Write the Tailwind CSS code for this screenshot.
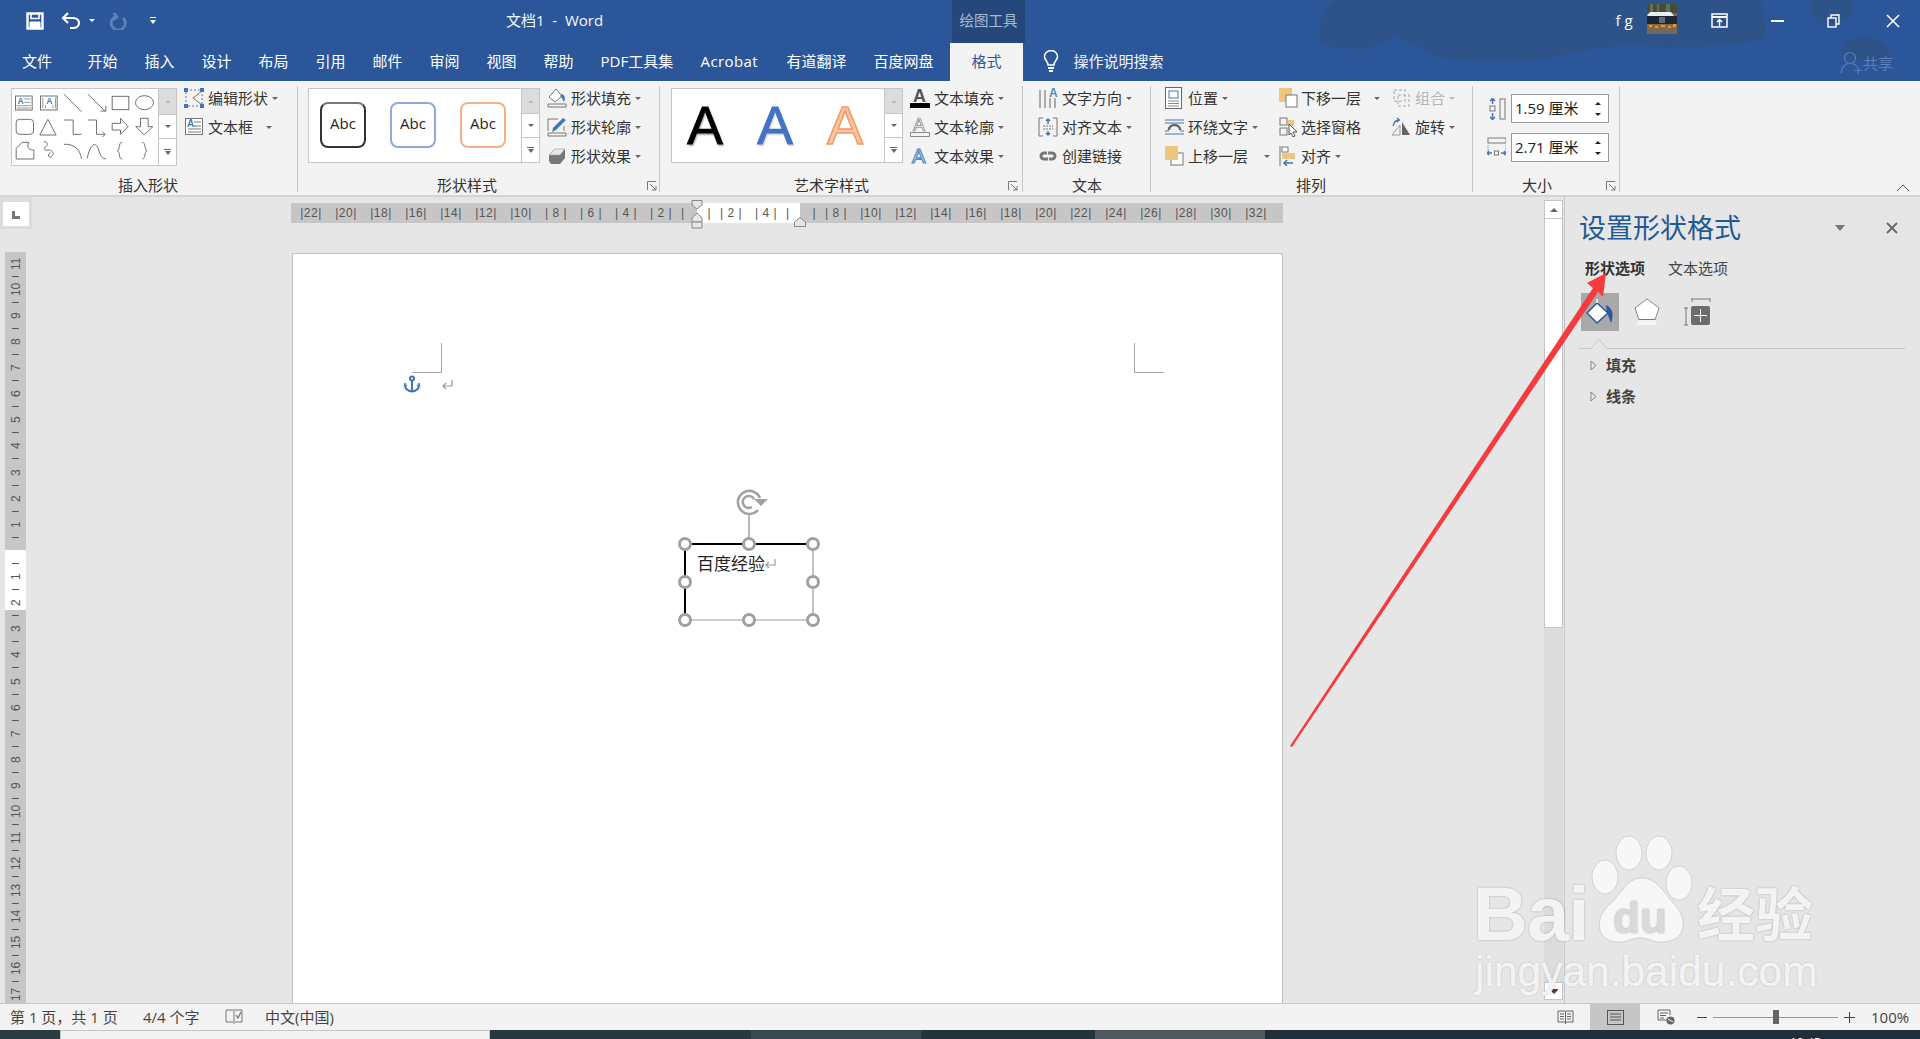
<!DOCTYPE html>
<html lang="zh-CN">
<head>
  <meta charset="UTF-8" />
  <title>文档1 - Word</title>
  <script src="https://cdn.jsdelivr.net/npm/@tailwindcss/browser@4"></script>
</head>
<body class="relative w-[1920px] h-[1039px] overflow-hidden flex flex-col bg-[#e6e6e6] text-[#333] [font-family:'Open_Sans','Noto_Sans_CJK_SC',sans-serif]">

  <!-- title + tabs -->
  <div class="relative bg-[#2b579a] text-white h-[81px] shrink-0">
    <svg class="absolute left-0 top-0" width="1920" height="81" viewBox="0 0 1920 81" fill="#2d5388">
      <path d="M1335 0C1318 14 1318 30 1322 44C1350 52 1385 50 1396 34C1405 46 1418 44 1428 50C1432 60 1480 64 1538 60C1560 58 1590 44 1640 46C1680 48 1735 48 1762 38C1772 34 1760 0 1760 0Z"/>
      <path d="M1812 0C1806 12 1812 24 1830 24C1850 24 1856 12 1852 0Z"/>
      <path d="M1842 50C1846 36 1866 32 1880 42C1892 50 1892 60 1886 66C1870 60 1852 62 1842 50Z"/>
    </svg>

    <div class="relative flex items-center h-[43px] pb-[2px]">
      <svg class="ml-[26px]" width="18" height="18" viewBox="0 0 18 18" fill="none" stroke="#fff" stroke-width="2.400"><path d="M1.500 1.500H16.500V16.500H1.500Z"/><path d="M5 1.500V6.500H13V1.500" stroke-width="1.600"/><path d="M4 10H14V16H4Z" fill="#fff" stroke-width="1"/></svg>
      <svg class="ml-[17px]" width="20" height="18" viewBox="0 0 20 18" fill="none" stroke="#fff" stroke-width="2.200"><path d="M7 1L2 6L7 11"/><path d="M2.500 6H12C20 6 20 16 12 16H9"/></svg>
      <i class="ml-[8px] border-x-[3px] border-t-[3.500px] border-x-transparent border-t-white"></i>
      <svg class="ml-[14px]" width="18" height="18" viewBox="0 0 18 18" fill="none" stroke="#5f82b5" stroke-width="2.800"><path d="M5 1L8 5L4 8"/><path d="M7 4.500A7 7 0 1 0 14 6"/></svg>
      <svg class="ml-[22px]" width="8" height="9" viewBox="0 0 8 9" fill="#fff"><rect x="1" y="1" width="6" height="1"/><path d="M1 4H7L4 8Z"/></svg>

      <span class="ml-[349px] w-[108px] text-[15px] whitespace-pre text-[#f3f6fb]">文档1  -  Word</span>
      <div class="ml-[338px] w-[73px] h-[43px] -mb-[2px] pb-[2px] bg-[#24487c] flex items-center justify-center text-[14.500px] text-[#a8b9d4] whitespace-nowrap">绘图工具</div>

      <span class="ml-[590.500px] text-[15px] whitespace-pre">f g</span>
      <svg class="ml-[14px] self-start mt-[4px]" width="30" height="30" viewBox="0 0 30 30">
        <rect width="30" height="30" fill="#6c6a66"/>
        <path d="M0 0H30V9H0Z" fill="#4a4a3c"/><path d="M3 0H6V8H3ZM10 0H12V8H10ZM19 0H23V8H19Z" fill="#5d7550"/>
        <path d="M3 8H24L27 12H0Z" fill="#e9eef2"/>
        <path d="M0 12H30V20H0Z" fill="#1d2635"/><path d="M12 13H18V19H12Z" fill="#5d6a80"/>
        <path d="M0 20H30V25H0Z" fill="#8a6a3a"/><path d="M2 21H5V23H2ZM8 22H11V24H8ZM14 21H18V23H14ZM21 22H24V24H21ZM26 20H29V23H26Z" fill="#e79a2e"/>
      </svg>
      <svg class="ml-[34px]" width="17" height="15" viewBox="0 0 17 15" fill="none" stroke="#fff" stroke-width="1.500"><rect x="1" y="1" width="15" height="13"/><path d="M1 4H16" stroke-width="2"/><path d="M8.500 13V7M6 9L8.500 6.500L11 9"/></svg>
      <div class="ml-[43px] w-[13px] h-[2px] bg-white"></div>
      <svg class="ml-[43.500px]" width="13" height="14" viewBox="0 0 13 14" fill="none" stroke="#fff" stroke-width="1.400"><rect x="1" y="4" width="8" height="9"/><path d="M4 4V1H12V10H9"/></svg>
      <svg class="ml-[46px]" width="14" height="14" viewBox="0 0 14 14" stroke="#fff" stroke-width="1.500"><path d="M1 1L13 13M13 1L1 13"/></svg>
    </div>

    <div class="relative flex items-center h-[38px] pb-[2px] pl-[22px] gap-[27px] text-[15px] whitespace-nowrap">
      <span class="w-[30px] mr-[8.500px]">文件</span>
      <span class="w-[30px]">开始</span><span class="w-[30px]">插入</span><span class="w-[30px]">设计</span><span class="w-[30px]">布局</span><span class="w-[30px]">引用</span><span class="w-[30px]">邮件</span><span class="w-[30px]">审阅</span><span class="w-[30px]">视图</span><span class="w-[30px]">帮助</span>
      <span class="w-[73px]">PDF工具集</span>
      <span class="w-[59px] tracking-[.4px]">Acrobat</span>
      <span class="w-[60px]">有道翻译</span>
      <span class="w-[60px]">百度网盘</span>
      <div class="-ml-[10.500px] w-[73px] h-[38px] -mb-[2px] pb-[2px] bg-[#f3f3f3] text-[#2b579a] flex items-center justify-center">格式</div>
      <svg class="-ml-[7.500px]" width="16" height="22" viewBox="0 0 16 22" fill="none" stroke="#fff" stroke-width="1.500"><path d="M5 15C5 11 1.500 10 1.500 6.500A6.500 6 0 0 1 14.500 6.500C14.500 10 11 11 11 15Z"/><path d="M5 18H11M6 21H10" stroke-width="2"/></svg>
      <span class="-ml-[12px] text-[#f1f4f9]">操作说明搜索</span>
      <div class="absolute left-[1840px] top-[8px] flex items-center text-[#5d7eb2] text-[15px]">
        <svg width="23" height="24" viewBox="0 0 23 24" fill="none" stroke="#5d7eb2" stroke-width="1.200"><circle cx="10" cy="7" r="5.500"/><path d="M1 22C2 15 6 13 8 12.500M12 12.500C14 13 16 14 17 16"/><path d="M18 16V23M14.500 19.500H22"/></svg>
        <span>共享</span>
      </div>
    </div>
  </div>

  <!-- ribbon -->
  <div class="relative flex h-[116px] shrink-0 bg-[#f3f3f3] border-b-[2px] border-[#d4d4d4] text-[15px] whitespace-nowrap">

    <!-- 插入形状 -->
    <div class="mt-[5px] w-[298px] h-[106px] border-r border-[#c6c6c6] flex flex-col">
      <div class="h-[88px] pt-[2px] pl-[11px] flex">
        <div class="flex h-[78px] border border-[#c6c6c6] bg-white">
          <svg width="146" height="76" viewBox="20 12 437 228" fill="none" stroke="#666" stroke-width="2.800">
            <rect x="30" y="33" width="50" height="42"/><text x="36" y="56" font-size="26" font-family="Liberation Sans" font-weight="bold" fill="#4a7ebb" stroke="none">A</text><path d="M56 42H76M56 52H76M34 62H76M34 69H76" stroke-width="2"/>
            <rect x="105" y="33" width="50" height="42"/><text x="122" y="56" font-size="26" font-family="Liberation Sans" font-weight="bold" fill="#4a7ebb" stroke="none">A</text><path d="M112 38V70M120 60V70M142 60V70M150 38V70" stroke-width="2"/>
            <path d="M175 27L228 80M247 27L300 80M285 78H301V62"/>
            <rect x="320" y="34" width="50" height="40"/><ellipse cx="417" cy="53" rx="27" ry="21"/>
            <rect x="32" y="103" width="52" height="45" rx="10"/><path d="M127 103L103 150H152Z"/>
            <path d="M175 105H203V148H228M247 105H273V148H298M291 140L299 148L291 156"/>
            <path d="M320 115H345V100L368 125L345 148V135H320Z"/><path d="M405 100H428V125H442L416 150L391 125H405Z"/>
            <path d="M32 190L50 172H70C60 190 75 195 85 195V222H32Z"/>
            <path d="M115 170C125 170 130 178 122 184C112 190 115 198 130 195C142 195 148 208 138 215C128 222 125 205 135 203"/>
            <path d="M175 178C205 175 225 195 228 222M245 220C255 175 270 170 278 190C285 215 290 220 302 222"/>
            <path d="M350 172C338 172 345 195 335 197C345 199 338 222 350 222M410 172C422 172 415 195 425 197C415 199 422 222 410 222"/>
          </svg>
          <div class="w-[18px] border-l border-[#c6c6c6] flex flex-col">
            <div class="h-[26px] bg-[#dcdcdc] flex items-center justify-center border-b border-[#c6c6c6]"><i class="border-x-[3px] border-b-[3.500px] border-x-transparent border-b-[#bbb]"></i></div>
            <div class="h-[24px] flex items-center justify-center border-b border-[#c6c6c6]"><i class="border-x-[3px] border-t-[3.500px] border-x-transparent border-t-[#666]"></i></div>
            <div class="flex-1 flex flex-col items-center justify-center gap-px"><b class="w-[7px] h-px bg-[#666]"></b><i class="border-x-[3.500px] border-t-[4px] border-x-transparent border-t-[#666]"></i></div>
          </div>
        </div>
        <div class="ml-[7px] -mt-px flex flex-col gap-[7px]">
          <div class="flex items-center h-[22px]">
            <svg class="mr-[3px]" width="21" height="20" viewBox="0 0 21 20" fill="none"><rect x="2" y="2" width="16" height="16" stroke="#777" stroke-dasharray="2 2"/><path d="M18 3L9 10L18 17" stroke="#777"/><path d="M0 0H4V4H0ZM16 0H20V4H16ZM0 16H4V20H0ZM16 16H20V20H16Z" fill="#3f78b8"/></svg>
            <span>编辑形状</span><i class="ml-[4px] border-x-[3px] border-t-[3.500px] border-x-transparent border-t-[#666]"></i>
          </div>
          <div class="flex items-center h-[22px]">
            <svg class="mr-[3px]" width="21" height="20" viewBox="0 0 21 20" fill="none" stroke="#777"><rect x="1.500" y="1.500" width="17" height="16" fill="#fff"/><path d="M10 5H17M10 9H17M4 12H17M4 15H17"/><text x="3" y="10" font-size="10" font-family="Liberation Sans" font-weight="bold" fill="#3f78b8" stroke="none">A</text></svg>
            <span>文本框</span><i class="ml-[13px] border-x-[3px] border-t-[3.500px] border-x-transparent border-t-[#666]"></i>
          </div>
        </div>
      </div>
      <div class="h-[18px] leading-[22px] pl-[118px]">插入形状</div>
    </div>

    <!-- 形状样式 -->
    <div class="relative mt-[5px] w-[362px] h-[106px] border-r border-[#c6c6c6] flex flex-col">
      <div class="h-[88px] pt-[2px] pl-[10px] flex">
        <div class="flex h-[75px] border border-[#c6c6c6] bg-white">
          <div class="w-[212px] pl-[11px] pt-[13px] flex gap-[24px] [font-family:'Open_Sans',sans-serif] text-[15px] text-[#222]">
            <div class="w-[46px] h-[46px] rounded-[8px] border-2 border-[#333] border-t-[#777] flex items-center justify-center pb-[4px]">Abc</div>
            <div class="w-[46px] h-[46px] rounded-[8px] border-2 border-[#8eaadb] flex items-center justify-center pb-[4px]">Abc</div>
            <div class="w-[46px] h-[46px] rounded-[8px] border-2 border-[#f4b183] flex items-center justify-center pb-[4px]">Abc</div>
          </div>
          <div class="w-[18px] border-l border-[#c6c6c6] flex flex-col">
            <div class="h-[25px] bg-[#dcdcdc] flex items-center justify-center border-b border-[#c6c6c6]"><i class="border-x-[3px] border-b-[3.500px] border-x-transparent border-b-[#bbb]"></i></div>
            <div class="h-[24px] flex items-center justify-center border-b border-[#c6c6c6]"><i class="border-x-[3px] border-t-[3.500px] border-x-transparent border-t-[#666]"></i></div>
            <div class="flex-1 flex flex-col items-center justify-center gap-px"><b class="w-[7px] h-px bg-[#666]"></b><i class="border-x-[3.500px] border-t-[4px] border-x-transparent border-t-[#666]"></i></div>
          </div>
        </div>
        <div class="ml-[7px] -mt-px flex flex-col gap-[7px]">
          <div class="flex items-center h-[22px]">
            <svg class="mr-[4px]" width="20" height="20" viewBox="0 0 20 20" fill="none" stroke="#777"><path d="M9 1L2 9L8 14L15 8Z" fill="#fff"/><path d="M15 6C19 8 18 12 17 14C15 11 15 9 13 8Z" fill="#3f78b8" stroke="none"/><path d="M1 16H19V19H1Z" fill="#f3f3f3"/></svg>
            <span>形状填充</span><i class="ml-[4px] border-x-[3px] border-t-[3.500px] border-x-transparent border-t-[#666]"></i>
          </div>
          <div class="flex items-center h-[22px]">
            <svg class="mr-[4px]" width="20" height="20" viewBox="0 0 20 20" fill="none" stroke="#777"><path d="M1 14V2H11M17 9V14"/><path d="M16 1L19 3L9 13L5 15L6 11Z" fill="#3f78b8" stroke="none"/><path d="M1 16H19V19H1Z" fill="#f3f3f3"/></svg>
            <span>形状轮廓</span><i class="ml-[4px] border-x-[3px] border-t-[3.500px] border-x-transparent border-t-[#666]"></i>
          </div>
          <div class="flex items-center h-[22px]">
            <svg class="mr-[4px]" width="20" height="20" viewBox="0 0 20 20"><path d="M2 9L8 3H18V12L13 18H4L2 15Z" fill="#777"/><path d="M2 9L8 3H18L13 9Z" fill="#e8e8e8" stroke="#999" stroke-width=".6"/></svg>
            <span>形状效果</span><i class="ml-[4px] border-x-[3px] border-t-[3.500px] border-x-transparent border-t-[#666]"></i>
          </div>
        </div>
      </div>
      <div class="h-[18px] leading-[22px] pl-[139px]">形状样式</div>
      <svg class="absolute right-[2px] bottom-[1px]" width="10" height="10" viewBox="0 0 10 10" fill="none" stroke="#777"><path d="M.5 9V.5H9M3 3L9 9M9 5V9H5"/></svg>
    </div>

    <!-- 艺术字样式 -->
    <div class="relative mt-[5px] w-[363px] h-[106px] border-r border-[#c6c6c6] flex flex-col">
      <div class="h-[88px] pt-[2px] pl-[11px] flex">
        <div class="flex h-[75px] border border-[#c6c6c6] bg-white">
          <div class="w-[212px] flex items-center pl-[15px] gap-[34px] text-[54px] leading-none [font-family:'Liberation_Sans',sans-serif] pb-[2px]">
            <span class="w-[36px] text-center text-black [-webkit-text-stroke:.8px_#000] [text-shadow:1px_2px_2px_rgba(0,0,0,.35)]">A</span>
            <span class="w-[36px] text-center text-[#4472c4] [-webkit-text-stroke:.8px_#4472c4] [text-shadow:1px_2px_2px_rgba(0,0,0,.2)]">A</span>
            <span class="w-[36px] text-center text-[#fbc5a4] [-webkit-text-stroke:1.500px_#ed9a63]">A</span>
          </div>
          <div class="w-[18px] border-l border-[#c6c6c6] flex flex-col">
            <div class="h-[25px] bg-[#dcdcdc] flex items-center justify-center border-b border-[#c6c6c6]"><i class="border-x-[3px] border-b-[3.500px] border-x-transparent border-b-[#bbb]"></i></div>
            <div class="h-[24px] flex items-center justify-center border-b border-[#c6c6c6]"><i class="border-x-[3px] border-t-[3.500px] border-x-transparent border-t-[#666]"></i></div>
            <div class="flex-1 flex flex-col items-center justify-center gap-px"><b class="w-[7px] h-px bg-[#666]"></b><i class="border-x-[3.500px] border-t-[4px] border-x-transparent border-t-[#666]"></i></div>
          </div>
        </div>
        <div class="ml-[7px] -mt-px flex flex-col gap-[7px]">
          <div class="flex items-center h-[22px]">
            <svg class="mr-[4px]" width="20" height="20" viewBox="0 0 20 20"><text x="3" y="14" font-size="18" font-family="Liberation Sans" font-weight="bold" fill="#555">A</text><rect x="0" y="15" width="20" height="5" fill="#000"/></svg>
            <span>文本填充</span><i class="ml-[4px] border-x-[3px] border-t-[3.500px] border-x-transparent border-t-[#666]"></i>
          </div>
          <div class="flex items-center h-[22px]">
            <svg class="mr-[4px]" width="20" height="20" viewBox="0 0 20 20"><text x="3" y="14" font-size="18" font-family="Liberation Sans" fill="#fff" stroke="#777" stroke-width=".7">A</text><path d="M.5 15.500H19.500V19.500H.5Z" fill="#f3f3f3" stroke="#888"/></svg>
            <span>文本轮廓</span><i class="ml-[4px] border-x-[3px] border-t-[3.500px] border-x-transparent border-t-[#666]"></i>
          </div>
          <div class="flex items-center h-[22px]">
            <svg class="mr-[4px]" width="20" height="20" viewBox="0 0 20 20"><text x="2" y="17" font-size="20" font-family="Liberation Sans" fill="#fff" stroke="#4a8ac7" stroke-width="1.200">A</text></svg>
            <span>文本效果</span><i class="ml-[4px] border-x-[3px] border-t-[3.500px] border-x-transparent border-t-[#666]"></i>
          </div>
        </div>
      </div>
      <div class="h-[18px] leading-[22px] pl-[134px]">艺术字样式</div>
      <svg class="absolute right-[4px] bottom-[1px]" width="10" height="10" viewBox="0 0 10 10" fill="none" stroke="#777"><path d="M.5 9V.5H9M3 3L9 9M9 5V9H5"/></svg>
    </div>

    <!-- 文本 -->
    <div class="mt-[5px] w-[128px] h-[106px] border-r border-[#c6c6c6] flex flex-col">
      <div class="h-[88px] pt-[1px] pl-[15px] flex flex-col gap-[7px]">
        <div class="flex items-center h-[22px]">
          <svg class="mr-[4px]" width="20" height="24" viewBox="0 0 20 24" fill="none" stroke="#666"><path d="M2 4V22M7 4V22M12 12V22M17 12V22"/><text x="11" y="11" font-size="12" font-family="Liberation Sans" font-weight="bold" fill="#4a8ac7" stroke="none">A</text></svg>
          <span>文字方向</span><i class="ml-[4px] border-x-[3px] border-t-[3.500px] border-x-transparent border-t-[#666]"></i>
        </div>
        <div class="flex items-center h-[22px]">
          <svg class="mr-[4px]" width="20" height="20" viewBox="0 0 20 20" fill="none" stroke="#777"><path d="M5 1H1V19H5M15 1H19V19H15"/><path d="M5 9H15M5 12H15" stroke-dasharray="2 1"/><path d="M10 2V7M8 4L10 2L12 4M10 18V14M8 16L10 18L12 16" stroke="#3f78b8" stroke-width="1.500"/></svg>
          <span>对齐文本</span><i class="ml-[4px] border-x-[3px] border-t-[3.500px] border-x-transparent border-t-[#666]"></i>
        </div>
        <div class="flex items-center h-[22px]">
          <svg class="mr-[4px]" width="20" height="20" viewBox="0 0 20 20" fill="none" stroke="#777" stroke-width="3"><path d="M9 7H6A3 3 0 0 0 6 13H10"/><path d="M11 13H14A3 3 0 0 0 14 7H10"/></svg>
          <span>创建链接</span>
        </div>
      </div>
      <div class="h-[18px] leading-[22px] pl-[49px]">文本</div>
    </div>

    <!-- 排列 -->
    <div class="mt-[5px] w-[322px] h-[106px] border-r border-[#c6c6c6] flex flex-col">
      <div class="h-[88px] pt-[1px] pl-[14px] flex">
        <div class="w-[114px] flex flex-col gap-[7px]">
          <div class="flex items-center h-[22px]">
            <svg class="mr-[4px]" width="19" height="22" viewBox="0 0 19 22" fill="none" stroke="#666"><rect x=".5" y=".5" width="16" height="21" fill="#fff"/><rect x="4" y="4" width="9" height="7" stroke="#3f78b8"/><path d="M3 14H14M3 16.500H14M3 19H14" stroke="#888"/></svg>
            <span>位置</span><i class="ml-[4px] border-x-[3px] border-t-[3.500px] border-x-transparent border-t-[#666]"></i>
          </div>
          <div class="flex items-center h-[22px]">
            <svg class="mr-[4px]" width="19" height="20" viewBox="0 0 19 20" fill="none" stroke="#3f78b8"><path d="M0 3H19M0 6H19M0 17H19M0 14H4M15 14H19"/><path d="M4 13A5.500 5 0 0 1 15 13" stroke="#666" stroke-width="2.500"/></svg>
            <span>环绕文字</span><i class="ml-[4px] border-x-[3px] border-t-[3.500px] border-x-transparent border-t-[#666]"></i>
          </div>
          <div class="flex items-center h-[22px]">
            <svg class="mr-[4px]" width="19" height="20" viewBox="0 0 19 20" fill="none"><rect x="6" y="7" width="12" height="12" fill="#fff" stroke="#777"/><rect x="0" y="0" width="13" height="14" fill="#edc77d"/></svg>
            <span>上移一层</span><i class="ml-[16px] border-x-[3px] border-t-[3.500px] border-x-transparent border-t-[#666]"></i>
          </div>
        </div>
        <div class="w-[113px] flex flex-col gap-[7px]">
          <div class="flex items-center h-[22px]">
            <svg class="mr-[3px]" width="19" height="20" viewBox="0 0 19 20" fill="none"><rect x="0" y="0" width="13" height="14" fill="#edc77d"/><rect x="7" y="7" width="11" height="12" fill="#fff" stroke="#777"/></svg>
            <span>下移一层</span><i class="ml-[13px] border-x-[3px] border-t-[3.500px] border-x-transparent border-t-[#666]"></i>
          </div>
          <div class="flex items-center h-[22px]">
            <svg class="mr-[3px]" width="19" height="20" viewBox="0 0 19 20" fill="none" stroke="#777"><rect x="1" y="1" width="7" height="7"/><rect x="1" y="11" width="7" height="7"/><rect x="9" y="3" width="6" height="6" fill="#edc77d" stroke="none"/><path d="M10 7L18 15H14L16 19L14 20L12 16L10 18Z" fill="#fff" stroke="#555"/></svg>
            <span>选择窗格</span>
          </div>
          <div class="flex items-center h-[22px]">
            <svg class="mr-[3px]" width="19" height="20" viewBox="0 0 19 20" fill="none"><path d="M1 0V20" stroke="#777"/><rect x="3" y="1" width="6" height="5" fill="#fff" stroke="#777"/><rect x="3" y="7" width="13" height="6" fill="#edc77d"/><path d="M14 17H5M8 14L5 17L8 20" stroke="#3f78b8" stroke-width="1.500"/></svg>
            <span>对齐</span><i class="ml-[4px] border-x-[3px] border-t-[3.500px] border-x-transparent border-t-[#666]"></i>
          </div>
        </div>
        <div class="flex flex-col gap-[7px]">
          <div class="flex items-center h-[22px] text-[#b5b5b5]">
            <svg class="mr-[5px]" width="18" height="20" viewBox="0 0 18 20" fill="none" stroke="#c0c0c0" stroke-width="1.500"><path d="M2 2H13V13H2Z" stroke-dasharray="3 2"/><path d="M6 7H17V18H6Z" stroke-dasharray="3 2"/></svg>
            <span>组合</span><i class="ml-[4px] border-x-[3px] border-t-[3.500px] border-x-transparent border-t-[#bbb]"></i>
          </div>
          <div class="flex items-center h-[22px]">
            <svg class="mr-[5px]" width="18" height="20" viewBox="0 0 18 20" fill="none"><path d="M10 5L18 18H10Z" fill="#666"/><path d="M8 8L0 18H8Z" stroke="#999"/><path d="M1 9C2 5 4 3 7 3M5 1L7.500 3L5 5" stroke="#3f78b8" stroke-width="1.300"/></svg>
            <span>旋转</span><i class="ml-[4px] border-x-[3px] border-t-[3.500px] border-x-transparent border-t-[#666]"></i>
          </div>
        </div>
      </div>
      <div class="h-[18px] leading-[22px] pl-[145px]">排列</div>
    </div>

    <!-- 大小 -->
    <div class="relative mt-[5px] w-[147px] h-[106px] border-r border-[#c6c6c6] flex flex-col">
      <div class="h-[88px] pt-[8px] pl-[14px] flex flex-col gap-[10px]">
        <div class="flex items-center">
          <svg class="mr-[5px]" width="19" height="22" viewBox="0 0 19 22" fill="none" stroke="#777"><rect x="13" y="1" width="5" height="20"/><rect x="3" y="8" width="5" height="5"/><path d="M5.500 1V6M3 3L5.500 .5L8 3M5.500 21V15M3 19L5.500 21.500L8 19" stroke="#3f78b8" stroke-width="1.500"/></svg>
          <div class="w-[98px] h-[29px] border border-[#999] bg-white flex items-center pl-[3px] relative text-[15px] text-[#222]">
            1.59 厘米
            <i class="absolute right-[7px] top-[7px] border-x-[3px] border-b-[3.500px] border-x-transparent border-b-[#222]"></i>
            <i class="absolute right-[7px] bottom-[6px] border-x-[3px] border-t-[3.500px] border-x-transparent border-t-[#222]"></i>
          </div>
        </div>
        <div class="flex items-center">
          <svg class="mr-[5px]" width="19" height="22" viewBox="0 0 19 22" fill="none" stroke="#777"><rect x="1" y="1" width="18" height="5"/><path d="M1 8V13M19 8V13" stroke-dasharray="1 1"/><rect x="7.500" y="14" width="4" height="4"/><path d="M5 16H0M2 14L0 16L2 18M14 16H19M17 14L19 16L17 18" stroke="#3f78b8" stroke-width="1.500"/></svg>
          <div class="w-[98px] h-[29px] border border-[#999] bg-white flex items-center pl-[3px] relative text-[15px] text-[#222]">
            2.71 厘米
            <i class="absolute right-[7px] top-[7px] border-x-[3px] border-b-[3.500px] border-x-transparent border-b-[#222]"></i>
            <i class="absolute right-[7px] bottom-[6px] border-x-[3px] border-t-[3.500px] border-x-transparent border-t-[#222]"></i>
          </div>
        </div>
      </div>
      <div class="h-[18px] leading-[22px] pl-[49px]">大小</div>
      <svg class="absolute right-[3px] bottom-[1px]" width="10" height="10" viewBox="0 0 10 10" fill="none" stroke="#777"><path d="M.5 9V.5H9M3 3L9 9M9 5V9H5"/></svg>
    </div>

    <svg class="absolute right-[10px] bottom-[3px]" width="14" height="8" viewBox="0 0 14 8" fill="none" stroke="#555"><path d="M1 7L7 1L13 7"/></svg>
  </div>

  <!-- work area -->
  <div class="flex h-[806px] shrink-0 overflow-hidden">
    <div class="w-[1544px] shrink-0 flex flex-col">
      <div class="flex h-[56px] shrink-0">
        <div class="w-[32px] h-[32px] bg-[#dcdcdc] pl-[3px] pt-[5px]">
          <div class="w-[26px] h-[24px] bg-white flex items-center justify-center">
            <svg width="9" height="9" viewBox="0 0 9 9" fill="#777"><path d="M0 1H3V6H8V9H0Z"/></svg>
          </div>
        </div>
        <!-- horizontal ruler -->
        <div class="relative ml-[259px] mt-[6px] w-[992px] h-[20px] bg-[#c6c6c6]">
          <div class="absolute left-[406px] top-0 w-[103px] h-[20px] bg-white"></div>
          <div id="hruler" class="relative opacity-[.99] flex pl-[2.500px] h-[20px] leading-[20px] text-[12px] tracking-[.5px] text-[#555] [font-family:'Liberation_Sans',sans-serif] whitespace-pre"></div>
          <svg class="absolute left-[399px] -top-[3px]" width="14" height="32" viewBox="0 0 14 32" fill="#e6e6e6" stroke="#888"><path d="M2 .5H12V5L7 9L2 5Z"/><path d="M7 13L12 18V22H2V18Z"/><path d="M2 22H12V28H2Z"/></svg>
          <svg class="absolute left-[503px] top-[14px]" width="12" height="10" viewBox="0 0 12 10" fill="#e6e6e6" stroke="#888"><path d="M6 .5L11.500 5V9.500H.5V5Z"/></svg>
        </div>
      </div>
      <div class="flex h-[750px] shrink-0">
        <!-- vertical ruler -->
        <div class="relative ml-[5px] -mt-[1px] w-[21px] h-[751px] bg-[#c6c6c6] shrink-0">
          <div class="absolute left-0 top-[298px] w-[21px] h-[60px] bg-white"></div>
          <div id="vruler" class="relative flex flex-col items-center pt-[4.500px] text-[12px] text-[#555] [font-family:'Liberation_Sans',sans-serif]"></div>
        </div>
        <!-- page -->
        <div class="relative ml-[266px] w-[991px] h-[750px] bg-white border-x border-t border-[#c0c0c0]">
          <div class="absolute left-[119px] top-[89px] w-[30px] h-[30px] border-r border-b border-[#a6a6a6]"></div>
          <div class="absolute left-[841px] top-[89px] w-[30px] h-[30px] border-l border-b border-[#a6a6a6]"></div>
          <svg class="absolute left-[110px] top-[121px]" width="18" height="18" viewBox="0 0 18 18" fill="none" stroke="#3f78b8" stroke-width="2"><circle cx="9" cy="3.500" r="2"/><path d="M9 5.500V16.500M2 10C2 14 5 16 9 16.500C13 16 16 14 16 10"/><path d="M1 11L2 8L4 11M14 11L16 8L17 11" stroke-width="1"/></svg>
          <svg class="absolute left-[149px] top-[126px]" width="12" height="10" viewBox="0 0 12 10" fill="none" stroke="#999" stroke-width="1.200"><path d="M10 0V6H1M4 3L1 6L4 9"/></svg>

          <!-- selected shape -->
          <svg class="absolute left-[379px] top-[234px]" width="150" height="150" viewBox="0 0 150 150" fill="none">
            <path d="M77 27V56" stroke="#a0a0a0" stroke-width="1.500"/>
            <path d="M88 10A11.500 11.500 0 1 0 86 22" stroke="#a0a0a0" stroke-width="2.500"/>
            <path d="M82 11A6 6 0 1 0 80 19" stroke="#a0a0a0" stroke-width="2.500"/>
            <path d="M82 11H96L89 18Z" fill="#a0a0a0"/>
            <path d="M13 132V56H141" stroke="#000" stroke-width="2"/>
            <path d="M141 56V132H13" stroke="#999" stroke-width="1.200"/>
            <g fill="#fff" stroke="#a0a0a0" stroke-width="3"><circle cx="13" cy="56" r="5.500"/><circle cx="77" cy="56" r="5.500"/><circle cx="141" cy="56" r="5.500"/><circle cx="13" cy="94" r="5.500"/><circle cx="141" cy="94" r="5.500"/><circle cx="13" cy="132" r="5.500"/><circle cx="77" cy="132" r="5.500"/><circle cx="141" cy="132" r="5.500"/></g>
          </svg>
          <div class="absolute left-[404px] top-[298px] flex items-center text-[17px] leading-[24px] text-[#222] whitespace-nowrap">
            百度经验
            <svg width="12" height="10" viewBox="0 0 12 10" fill="none" stroke="#999" stroke-width="1.200"><path d="M10 0V6H1M4 3L1 6L4 9"/></svg>
          </div>
        </div>
      </div>
    </div>

    <!-- scrollbar -->
    <div class="w-[19px] shrink-0 mt-[3px] h-[800px] flex flex-col bg-[#dcdcdc]">
      <div class="h-[19px] bg-white border border-[#c6c6c6] flex items-center justify-center"><i class="border-x-[4.500px] border-b-[4.500px] border-x-transparent border-b-[#666]"></i></div>
      <div class="h-[409px] bg-white border-x border-b border-[#c6c6c6]"></div>
      <div class="flex-1"></div>
      <div class="h-[18px] bg-white border border-[#c6c6c6] flex flex-col items-center justify-center"><b class="w-[9px] h-px bg-[#444]"></b><i class="border-x-[4px] border-t-[4px] border-x-transparent border-t-[#444]"></i></div>
    </div>

    <!-- format pane -->
    <div class="ml-px w-[356px] shrink-0 border-l border-[#c6c6c6] pl-[14px] pt-[13px]">
      <div class="flex items-center h-[36px] w-[326px]">
        <span class="text-[27px] leading-[36px] text-[#1f5a96] whitespace-nowrap">设置形状格式</span>
        <i class="ml-[94px] border-x-[5.500px] border-t-[6px] border-x-transparent border-t-[#777]"></i>
        <svg class="ml-[41px]" width="12" height="12" viewBox="0 0 12 12" stroke="#666" stroke-width="1.800"><path d="M1 1L11 11M11 1L1 11"/></svg>
      </div>
      <div class="mt-[11px] pl-[6px] h-[22px] flex gap-[23px] items-center text-[15px] whitespace-nowrap">
        <span class="font-bold text-[#333]">形状选项</span>
        <span class="text-[#444]">文本选项</span>
      </div>
      <div class="mt-[14px] pl-[2px] flex">
        <div class="w-[38px] h-[38px] bg-[#a9a9a9] flex items-center justify-center">
          <svg width="28" height="26" viewBox="0 0 28 26" fill="none"><path d="M1 14L11 4L22 14L11 24Z" fill="#fff" stroke="#2b579a" stroke-width="1.500"/><path d="M11 4V0" stroke="#fff" stroke-width="1.500"/><path d="M20 6C27 9 28 16 25 24C23 20 23 17 21 14Z" fill="#2b579a"/></svg>
        </div>
        <div class="ml-[9px] w-[38px] h-[38px] flex items-center justify-center">
          <svg width="26" height="28" viewBox="0 0 26 28" fill="none"><path d="M13 1L25 10L21 22H5L1 10Z" fill="#fff" stroke="#888"/><path d="M5 22H21" stroke="#777" stroke-width="2"/><path d="M5 22L3 27H23L21 22" fill="#f5f5f5"/></svg>
        </div>
        <div class="ml-[12px] w-[38px] h-[38px] flex items-center justify-center">
          <svg width="28" height="28" viewBox="0 0 28 28" fill="none" stroke="#777"><path d="M9 1H27M9 0V4M27 0V4"/><path d="M1 10H5M3 10V27M1 27H5"/><rect x="8" y="8" width="19" height="19" rx="2" fill="#6c6c6c" stroke="none"/><path d="M17.500 11V24M11 17.500H24" stroke="#fff"/></svg>
        </div>
      </div>
      <div class="relative mt-[17px] w-[326px] border-t border-[#c6c6c6]">
        <svg class="absolute left-[11px] -top-[10px]" width="18" height="11" viewBox="0 0 18 11" fill="#e6e6e6" stroke="#c6c6c6"><path d="M0 10.500L9 .5L18 10.500"/></svg>
      </div>
      <div class="mt-[1px] h-[31px] pl-[11px] flex items-center gap-[9px] text-[15px] font-bold text-[#444]">
        <svg width="7" height="11" viewBox="0 0 7 11" fill="none" stroke="#888"><path d="M1 1L6 5.500L1 10Z"/></svg><span>填充</span>
      </div>
      <div class="h-[31px] pl-[11px] flex items-center gap-[9px] text-[15px] font-bold text-[#444]">
        <svg width="7" height="11" viewBox="0 0 7 11" fill="none" stroke="#888"><path d="M1 1L6 5.500L1 10Z"/></svg><span>线条</span>
      </div>
    </div>
  </div>

  <!-- status bar -->
  <div class="relative flex items-center h-[27px] shrink-0 bg-[#f3f3f3] border-t border-[#c6c6c6] text-[15px] text-[#444] whitespace-pre">
    <span class="ml-[10px] w-[133px]">第 1 页，共 1 页</span>
    <span class="w-[82px]">4/4 个字</span>
    <svg width="18" height="16" viewBox="0 0 18 16" fill="none" stroke="#777"><path d="M8 1H1V13H8M10 1H17V13H10M9 0V15"/><path d="M11 6L13 9L16 3" stroke-width="1.300"/></svg>
    <span class="ml-[22px] w-[70px]">中文(中国)</span>

    <svg class="ml-[1222px]" width="17" height="14" viewBox="0 0 17 14" fill="none" stroke="#666"><path d="M1 1H8M9 1H16V12H1V1M8.500 1V14M3 4H7M3 6.500H7M3 9H7M10 4H14M10 6.500H14M10 9H14"/></svg>
    <div class="ml-[16px] w-[50px] h-[26px] bg-[#c6c6c6] flex items-center justify-center">
      <svg width="17" height="15" viewBox="0 0 17 15" fill="none" stroke="#555"><rect x=".5" y=".5" width="16" height="14"/><path d="M3 4H14M3 7H14M3 10H14" stroke-width="1.200"/></svg>
    </div>
    <svg class="ml-[17px]" width="18" height="16" viewBox="0 0 18 16" fill="none" stroke="#666"><path d="M12 11H1V1H13V6M3 4H11M3 6.500H9M3 9H7"/><circle cx="13.500" cy="11.500" r="4" fill="#666" stroke="none"/><path d="M11 10L16 13" stroke="#fff"/></svg>
    <div class="ml-[22px] w-[10px] h-px bg-[#444]"></div>
    <div class="relative ml-[6px] w-[125px] h-px bg-[#999]">
      <div class="absolute left-[60px] -top-[7px] w-[6px] h-[14px] bg-[#666]"></div>
    </div>
    <svg class="ml-[6px]" width="11" height="11" viewBox="0 0 11 11" stroke="#444"><path d="M0 5.500H11M5.500 0V11"/></svg>
    <span class="ml-[16px]">100%</span>
  </div>

  <!-- taskbar, mostly cropped -->
  <div class="relative flex h-[9px] shrink-0 overflow-hidden bg-[#1f2e38]">
    <div class="w-[60px] bg-[#2a3b42]"></div>
    <div class="w-[430px] bg-[#f2f2f2] border-x border-t border-[#c6c6c6]"></div>
    <div class="w-[261px] bg-[#28383f]"></div>
    <div class="w-[170px] bg-[#3a4a52]"></div>
    <div class="w-[174px] bg-[#22343c]"></div>
    <div class="w-[170px] bg-[#4f585d]"></div>
    <span class="absolute left-[1790px] top-[6px] text-[12px] leading-[14px] text-white">10:45</span>
  </div>

  <!-- red arrow drawn over the screenshot -->
  <svg class="absolute left-0 top-0 pointer-events-none" width="1920" height="1039" viewBox="0 0 1920 1039">
    <path d="M1290 746L1593 288L1587 283L1606 273L1603 297L1598 292L1292 747Z" fill="#f53b3f"/>
  </svg>

  <!-- watermark -->
  <div class="absolute left-0 top-0 w-[1920px] h-[1039px] pointer-events-none [font-family:'Liberation_Sans',sans-serif] font-bold text-[#f8f8f8]/95 leading-none [text-shadow:0_0_2px_rgba(0,0,0,.3)]">
    <svg class="absolute left-[1590px] top-[830px]" width="105" height="120" viewBox="0 0 105 120" fill="#f8f8f8" fill-opacity=".95" stroke="#000" stroke-opacity=".12">
      <ellipse cx="39" cy="23" rx="13" ry="17"/><ellipse cx="69" cy="23" rx="13" ry="17"/><ellipse cx="15" cy="47" rx="13" ry="17"/><ellipse cx="89" cy="53" rx="13" ry="17"/>
      <path d="M52 48C68 48 76 66 86 76C98 90 96 112 72 112C62 112 58 108 50 108C42 108 36 113 26 112C6 110 4 88 20 74C32 64 36 48 52 48Z"/>
    </svg>
    <span class="absolute left-[1473px] top-[876px] text-[76px] tracking-[-1px]">Bai</span>
    <span class="absolute left-[1613px] top-[896px] text-[44px] text-[#dadada]">du</span>
    <span class="absolute left-[1697px] top-[882px] text-[58px] [font-family:'Noto_Sans_CJK_SC',sans-serif]">经验</span>
    <span class="absolute left-[1475px] top-[951px] text-[42.500px] font-normal [-webkit-text-stroke:.5px_#f8f8f8]">jingyan.baidu.com</span>
  </div>

  <script>
    // ruler numbers: negative side, zero, positive side
    const hCells = [];
    for (let n = 22; n >= 2; n -= 2) hCells.push(n);
    hCells.push('');
    for (let n = 2; n <= 32; n += 2) hCells.push(n === 6 ? '' : n);
    document.getElementById('hruler').innerHTML = hCells
      .map(n => `<span class="w-[35px] text-center">${n === '' ? '|      |' : (n < 10 ? '| ' + n + ' |' : '|' + n + '|')}</span>`)
      .join('');

    const vNums = [11,10,9,8,7,6,5,4,3,2,1,'',1,2,3,4,5,6,7,8,9,10,11,12,13,14,15,16,17];
    document.getElementById('vruler').innerHTML = vNums
      .map(n => `<div class="h-[13.075px] flex items-center justify-center leading-none [writing-mode:vertical-rl] rotate-180 whitespace-nowrap">${n}</div><div class="h-[13.075px] flex items-center justify-center"><b class="w-[7px] h-px bg-[#555]"></b></div>`)
      .join('');
  </script>
</body>
</html>
